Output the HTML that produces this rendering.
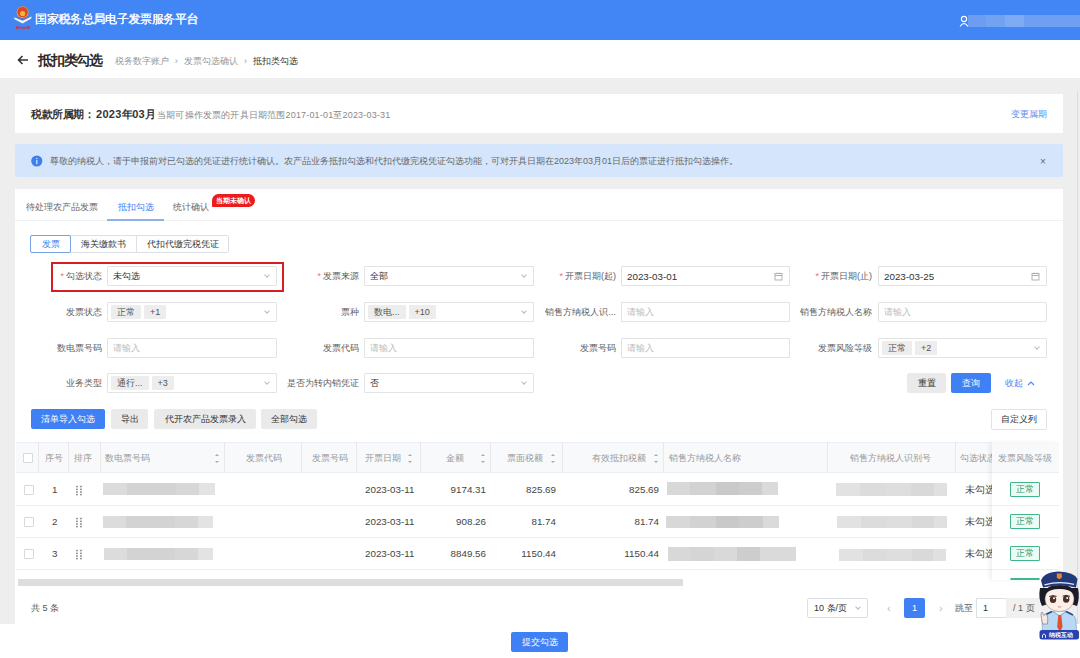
<!DOCTYPE html>
<html><head><meta charset="utf-8">
<style>
*{box-sizing:border-box;margin:0;padding:0}
html,body{width:1080px;height:658px;overflow:hidden;background:#eeeeee;font-family:"Liberation Sans",sans-serif;color:#333}
.a{position:absolute;white-space:nowrap}
#hdr{left:0;top:0;width:1080px;height:40px;background:#4285f4}
#ph{left:0;top:40px;width:1080px;height:38px;background:#fff}
.card{background:#fff}
.t9{font-size:9px}
.inp{position:absolute;height:20px;border:1px solid #e3e3e3;border-radius:1px;background:#fff;font-size:9px;line-height:19px;padding-left:5px;color:#333}
.ph{color:#bbb}
.lbl{position:absolute;font-size:9px;color:#606060;text-align:right;line-height:20px}
.req{color:#f56c6c;margin-right:2px}
.chev{position:absolute;right:7px;top:6px;width:4px;height:4px;border-right:1px solid #bbb;border-bottom:1px solid #bbb;transform:rotate(45deg)}
.tag{display:inline-block;height:14px;line-height:14px;background:#ededed;color:#555;padding:0 6px;border-radius:1px;margin-right:3px;font-size:9px;vertical-align:top;margin-top:2px}
.btn{position:absolute;height:20px;line-height:20px;text-align:center;font-size:9px;border-radius:2px;background:#eaeaea;color:#333}
.bp{background:#3f80f4;color:#fff}
.th{position:absolute;top:443px;height:31px;line-height:31px;font-size:9px;color:#999}
.vd{position:absolute;top:442px;width:1px;height:31px;background:#e8e8e8}
.hl{position:absolute;left:16px;width:1043px;height:1px;background:#ebeef5}
.cell{position:absolute;font-size:9.8px;color:#444;line-height:12px}
.blur{position:absolute;height:12px;background:linear-gradient(90deg,#dcdcdc 0 21%,#d3d3d3 21% 65%,#d7d7d7 65% 86%,#e3e3e3 86%)}
.bn{background:linear-gradient(90deg,#d8d8d8 0 21%,#d2d2d2 21% 44%,#c9c9c9 44% 65%,#cdcdcd 65% 86%,#dadada 86%)}
.bi{background:linear-gradient(90deg,#e2e2e2 0 22%,#dcdcdc 22% 45%,#dedede 45% 68%,#d9d9d9 68% 88%,#e0e0e0 88%)}
.cb{position:absolute;width:10px;height:10px;border:1px solid #d9d9d9;border-radius:1px;background:#fff}
.sort{position:absolute;width:4px;height:9px}
.sort:before{content:"";position:absolute;left:0;top:0;border:2px solid transparent;border-bottom:2.5px solid #aaa;border-top:0}
.sort:after{content:"";position:absolute;left:0;bottom:0;border:2px solid transparent;border-top:2.5px solid #aaa;border-bottom:0}
.ok{position:absolute;width:30px;height:15px;border:1px solid #3cb88a;color:#28a070;background:#eefaf5;font-size:9px;line-height:13px;text-align:center;border-radius:1px}

</style></head><body>

<!-- top header -->
<div id="hdr" class="a">
  <svg class="a" style="left:13px;top:5px" width="20" height="26" viewBox="0 0 20 26">
    <circle cx="9.6" cy="7.2" r="6" fill="#e6a23a"/>
    <circle cx="9.6" cy="7" r="5.2" fill="#e2442a"/>
    <circle cx="9.6" cy="8.6" r="2.6" fill="#f2b63c"/>
    <path d="M1 12.3 L9.6 15.8 L18.5 11.6 L18.2 13.6 L9.6 18.6 L1.6 14.3 Z" fill="#f4f6fb"/>
    <path d="M4 13.2 L9.6 15.3 L15.5 12.6 L15.5 11 L9.6 13.4 L4 11.5Z" fill="#6a6f88" opacity="0.6"/>
    <g fill="#c83a4a"><rect x="3" y="21.2" width="2.6" height="2.6"/><rect x="6.4" y="21.8" width="2.4" height="2"/><rect x="9.6" y="21.8" width="3" height="2"/><rect x="13.4" y="21.4" width="3.4" height="2.4"/></g>
  </svg>
  <div class="a" style="left:35px;top:10.5px;font-size:11.7px;line-height:16px;color:#fff;letter-spacing:-0.35px;text-shadow:0.3px 0 0 #fff">国家税务总局电子发票服务平台</div>
  <svg class="a" style="left:959px;top:15px" width="10" height="12" viewBox="0 0 10 12"><circle cx="5" cy="4" r="2.6" fill="none" stroke="#fff" stroke-width="1.1"/><path d="M1 11.5 Q5 5.5 9 11.5" fill="none" stroke="#fff" stroke-width="1.1"/></svg>
  <div class="a" style="left:968px;top:15px;width:112px;height:12px;background:linear-gradient(90deg,#6c9df1 0 16%,#72a2f2 16% 33%,#7eabf4 33% 50%,#6e9ff1 50%)"></div>
</div>

<!-- page header -->
<div id="ph" class="a">
  <svg class="a" style="left:17px;top:15px" width="12" height="10" viewBox="0 0 12 10"><path d="M11 5H1.5M5.5 1L1.5 5L5.5 9" stroke="#333" stroke-width="1.6" fill="none"/></svg>
  <div class="a" style="left:38px;top:12px;font-size:13.5px;line-height:18px;font-weight:bold;color:#2a2a2a;letter-spacing:-1.2px">抵扣类勾选</div>
  <div class="a" style="left:115px;top:16px;font-size:9px;line-height:11px;color:#999;letter-spacing:-0.1px">税务数字账户 <span style="margin:0 4px">›</span> 发票勾选确认 <span style="margin:0 4px">›</span> <span style="color:#333">抵扣类勾选</span></div>
</div>

<!-- card 1 -->
<div class="a card" style="left:15px;top:94px;width:1048px;height:39px">
  <div class="a" style="left:16px;top:14px;font-size:10.5px;line-height:13px;font-weight:bold;color:#333;letter-spacing:-0.5px">税款所属期：<span style="font-size:11px;letter-spacing:0.3px;margin-left:2px">2023</span>年<span style="font-size:11px;letter-spacing:0.3px">03</span>月</div>
  <div class="a" style="left:142px;top:16px;font-size:9px;line-height:11px;color:#8a8a8a;letter-spacing:0.18px">当期可操作发票的开具日期范围2017-01-01至2023-03-31</div>
  <div class="a" style="left:996px;top:15px;font-size:9px;line-height:11px;color:#5a8cf0">变更属期</div>
</div>

<!-- alert -->
<div class="a" style="left:15px;top:144px;width:1048px;height:33px;background:#d5e6fc;border-radius:2px">
  <svg class="a" style="left:16px;top:11px" width="12" height="12" viewBox="0 0 12 12"><circle cx="5.8" cy="6" r="5.6" fill="#3f80ef"/><rect x="5.2" y="5" width="1.2" height="4.2" fill="#d8e6fb"/><rect x="5.2" y="2.9" width="1.2" height="1.2" fill="#d8e6fb"/></svg>
  <div class="a" style="left:35px;top:12px;font-size:9px;line-height:11px;color:#666">尊敬的纳税人，请于申报前对已勾选的凭证进行统计确认。农产品业务抵扣勾选和代扣代缴完税凭证勾选功能，可对开具日期在2023年03月01日后的票证进行抵扣勾选操作。</div>
  <div class="a" style="left:1025px;top:12px;font-size:10px;line-height:12px;color:#666">×</div>
</div>

<!-- card 2 -->
<div class="a card" style="left:15px;top:189px;width:1048px;height:435px"></div>

<!-- tabs -->
<div class="a" style="left:15px;top:220px;width:1048px;height:1px;background:#eef0f3"></div>
<div class="a" style="left:26px;top:201.5px;font-size:9px;line-height:11px;color:#666">待处理农产品发票</div>
<div class="a" style="left:118px;top:201.5px;font-size:9px;line-height:11px;color:#3d7ff5">抵扣勾选</div>
<div class="a" style="left:107px;top:219px;width:57px;height:2px;background:#8fb0ea"></div>
<div class="a" style="left:173px;top:201.5px;font-size:9px;line-height:11px;color:#666">统计确认</div>
<div class="a" style="left:212px;top:194px;width:43px;height:13px;border-radius:7px 7px 7px 1px;background:#ec1c1c;color:#fff;font-size:7px;line-height:13px;text-align:center;font-weight:bold">当期未确认</div>

<!-- segmented -->
<div class="a" style="left:30px;top:235px;width:199px;height:18px;border:1px solid #dcdfe6;border-radius:2px;background:#fff"></div>
<div class="a" style="left:70px;top:236px;width:1px;height:16px;background:#dcdfe6"></div>
<div class="a" style="left:136px;top:236px;width:1px;height:16px;background:#dcdfe6"></div>
<div class="a" style="left:30px;top:235px;width:41px;height:18px;border:1px solid #76a0ea;border-radius:2px;color:#3d7ff5;font-size:9px;line-height:16px;text-align:center">发票</div>
<div class="a" style="left:71px;top:235px;width:65px;height:18px;font-size:9px;line-height:18px;text-align:center;color:#333">海关缴款书</div>
<div class="a" style="left:137px;top:235px;width:92px;height:18px;font-size:9px;line-height:18px;text-align:center;color:#333">代扣代缴完税凭证</div>

<!-- form -->
<div class="a" style="left:51px;top:262px;width:233px;height:30px;border:2px solid #d61e22"></div>

<div class="lbl" style="left:40px;top:266px;width:62px"><span class="req">*</span>勾选状态</div>
<div class="inp" style="left:107px;top:266px;width:170px">未勾选<i class="chev"></i></div>
<div class="lbl" style="left:290px;top:266px;width:69px"><span class="req">*</span>发票来源</div>
<div class="inp" style="left:364px;top:266px;width:170px">全部<i class="chev"></i></div>
<div class="lbl" style="left:540px;top:266px;width:76px"><span class="req">*</span>开票日期(起)</div>
<div class="inp" style="left:621px;top:266px;width:169px"><span style="font-size:9.8px">2023-03-01</span><svg style="position:absolute;right:6px;top:5px" width="9" height="9" viewBox="0 0 9 9"><rect x="1" y="1.5" width="7" height="6.5" fill="none" stroke="#aaa" stroke-width="0.9"/><path d="M1 3.5H8M3 0.5V2M6 0.5V2" stroke="#aaa" stroke-width="0.9"/></svg></div>
<div class="lbl" style="left:795px;top:266px;width:77px"><span class="req">*</span>开票日期(止)</div>
<div class="inp" style="left:878px;top:266px;width:169px"><span style="font-size:9.8px">2023-03-25</span><svg style="position:absolute;right:6px;top:5px" width="9" height="9" viewBox="0 0 9 9"><rect x="1" y="1.5" width="7" height="6.5" fill="none" stroke="#aaa" stroke-width="0.9"/><path d="M1 3.5H8M3 0.5V2M6 0.5V2" stroke="#aaa" stroke-width="0.9"/></svg></div>

<div class="lbl" style="left:40px;top:302px;width:62px">发票状态</div>
<div class="inp" style="left:107px;top:302px;width:170px;padding-left:3px"><span class="tag">正常</span><span class="tag">+1</span><i class="chev"></i></div>
<div class="lbl" style="left:290px;top:302px;width:69px">票种</div>
<div class="inp" style="left:364px;top:302px;width:170px;padding-left:3px"><span class="tag">数电...</span><span class="tag">+10</span><i class="chev"></i></div>
<div class="lbl" style="left:540px;top:302px;width:76px">销售方纳税人识...</div>
<div class="inp ph" style="left:621px;top:302px;width:169px">请输入</div>
<div class="lbl" style="left:795px;top:302px;width:77px">销售方纳税人名称</div>
<div class="inp ph" style="left:878px;top:302px;width:169px">请输入</div>

<div class="lbl" style="left:40px;top:338px;width:62px">数电票号码</div>
<div class="inp ph" style="left:107px;top:338px;width:170px">请输入</div>
<div class="lbl" style="left:290px;top:338px;width:69px">发票代码</div>
<div class="inp ph" style="left:364px;top:338px;width:170px">请输入</div>
<div class="lbl" style="left:540px;top:338px;width:76px">发票号码</div>
<div class="inp ph" style="left:621px;top:338px;width:169px">请输入</div>
<div class="lbl" style="left:795px;top:338px;width:77px">发票风险等级</div>
<div class="inp" style="left:878px;top:338px;width:169px;padding-left:3px"><span class="tag">正常</span><span class="tag">+2</span><i class="chev"></i></div>

<div class="lbl" style="left:40px;top:373px;width:62px">业务类型</div>
<div class="inp" style="left:107px;top:373px;width:170px;padding-left:3px"><span class="tag">通行...</span><span class="tag">+3</span><i class="chev"></i></div>
<div class="lbl" style="left:280px;top:373px;width:79px">是否为转内销凭证</div>
<div class="inp" style="left:364px;top:373px;width:170px">否<i class="chev"></i></div>

<div class="btn" style="left:907px;top:373px;width:39px">重置</div>
<div class="btn bp" style="left:951px;top:373px;width:40px">查询</div>
<div class="a" style="left:1005px;top:377px;font-size:9px;line-height:12px;color:#4a86ee">收起</div>
<svg class="a" style="left:1027px;top:380px" width="8" height="6" viewBox="0 0 8 6"><path d="M1 5L4 2L7 5" stroke="#4a86ee" stroke-width="1.1" fill="none"/></svg>

<!-- action buttons -->
<div class="btn bp" style="left:31px;top:409px;width:74px">清单导入勾选</div>
<div class="btn" style="left:111px;top:409px;width:37px">导出</div>
<div class="btn" style="left:154px;top:409px;width:102px">代开农产品发票录入</div>
<div class="btn" style="left:261px;top:409px;width:56px">全部勾选</div>
<div class="btn" style="left:991px;top:409px;width:56px;height:21px;background:#fff;border:1px solid #e3e3e3;line-height:19px">自定义列</div>

<!-- table -->
<div class="a" style="left:16px;top:442px;width:1043px;height:31px;background:#f8f9fb"></div>
<div class="hl" style="top:442px"></div>
<div class="hl" style="top:472px"></div>
<div class="hl" style="top:505px"></div>
<div class="hl" style="top:537px"></div>
<div class="hl" style="top:569px"></div>

<div class="vd" style="left:38px"></div>
<div class="vd" style="left:68px"></div>
<div class="vd" style="left:100px"></div>
<div class="vd" style="left:224px"></div>
<div class="vd" style="left:301px"></div>
<div class="vd" style="left:356px"></div>
<div class="vd" style="left:420px"></div>
<div class="vd" style="left:490px"></div>
<div class="vd" style="left:562px"></div>
<div class="vd" style="left:663px"></div>
<div class="vd" style="left:827px"></div>
<div class="vd" style="left:955px"></div>

<div class="cb" style="left:23px;top:453px"></div>
<div class="th" style="left:45px">序号</div>
<div class="th" style="left:74px">排序</div>
<div class="th" style="left:105px">数电票号码</div><i class="sort" style="left:215px;top:453.5px"></i>
<div class="th" style="left:246px">发票代码</div>
<div class="th" style="left:312px">发票号码</div>
<div class="th" style="left:365px">开票日期</div><i class="sort" style="left:408px;top:453.5px"></i>
<div class="th" style="left:446px">金额</div><i class="sort" style="left:481px;top:453.5px"></i>
<div class="th" style="left:507px">票面税额</div><i class="sort" style="left:551px;top:453.5px"></i>
<div class="th" style="left:592px">有效抵扣税额</div><i class="sort" style="left:654px;top:453.5px"></i>
<div class="th" style="left:669px">销售方纳税人名称</div>
<div class="th" style="left:850px">销售方纳税人识别号</div>
<div class="th" style="left:960px">勾选状态</div>

<!-- rows -->
<div class="cb" style="left:24px;top:485px"></div>
<div class="cell" style="left:52px;top:484px">1</div>
<svg class="a" style="left:76px;top:485px" width="7" height="11" viewBox="0 0 7 11" fill="#777"><rect x="0.2" y="0.8" width="1.5" height="1.5"/><rect x="4.2" y="0.8" width="1.5" height="1.5"/><rect x="0.2" y="3.6" width="1.5" height="1.5"/><rect x="4.2" y="3.6" width="1.5" height="1.5"/><rect x="0.2" y="6.2" width="1.5" height="1.5"/><rect x="4.2" y="6.2" width="1.5" height="1.5"/><rect x="0.2" y="8.8" width="1.5" height="1.5"/><rect x="4.2" y="8.8" width="1.5" height="1.5"/></svg>
<div class="blur" style="left:103px;top:483px;width:112px"></div>
<div class="cell" style="left:365px;top:484px">2023-03-11</div>
<div class="cell" style="left:420px;top:484px;width:66px;text-align:right">9174.31</div>
<div class="cell" style="left:490px;top:484px;width:66px;text-align:right">825.69</div>
<div class="cell" style="left:563px;top:484px;width:96px;text-align:right">825.69</div>
<div class="blur bn" style="left:667px;top:482px;width:111px;height:13px"></div>
<div class="blur bi" style="left:836px;top:483px;width:111px;height:12.5px"></div>
<div class="cell" style="left:965px;top:484px">未勾选</div>

<div class="cb" style="left:24px;top:517px"></div>
<div class="cell" style="left:52px;top:516px">2</div>
<svg class="a" style="left:76px;top:517px" width="7" height="11" viewBox="0 0 7 11" fill="#777"><rect x="0.2" y="0.8" width="1.5" height="1.5"/><rect x="4.2" y="0.8" width="1.5" height="1.5"/><rect x="0.2" y="3.6" width="1.5" height="1.5"/><rect x="4.2" y="3.6" width="1.5" height="1.5"/><rect x="0.2" y="6.2" width="1.5" height="1.5"/><rect x="4.2" y="6.2" width="1.5" height="1.5"/><rect x="0.2" y="8.8" width="1.5" height="1.5"/><rect x="4.2" y="8.8" width="1.5" height="1.5"/></svg>
<div class="blur" style="left:103px;top:516px;width:110px;height:11.5px"></div>
<div class="cell" style="left:365px;top:516px">2023-03-11</div>
<div class="cell" style="left:420px;top:516px;width:66px;text-align:right">908.26</div>
<div class="cell" style="left:490px;top:516px;width:66px;text-align:right">81.74</div>
<div class="cell" style="left:563px;top:516px;width:96px;text-align:right">81.74</div>
<div class="blur bn" style="left:666px;top:515.5px;width:113px"></div>
<div class="blur bi" style="left:837px;top:516px;width:110px"></div>
<div class="cell" style="left:965px;top:516px">未勾选</div>

<div class="cb" style="left:24px;top:549px"></div>
<div class="cell" style="left:52px;top:548px">3</div>
<svg class="a" style="left:76px;top:549px" width="7" height="11" viewBox="0 0 7 11" fill="#777"><rect x="0.2" y="0.8" width="1.5" height="1.5"/><rect x="4.2" y="0.8" width="1.5" height="1.5"/><rect x="0.2" y="3.6" width="1.5" height="1.5"/><rect x="4.2" y="3.6" width="1.5" height="1.5"/><rect x="0.2" y="6.2" width="1.5" height="1.5"/><rect x="4.2" y="6.2" width="1.5" height="1.5"/><rect x="0.2" y="8.8" width="1.5" height="1.5"/><rect x="4.2" y="8.8" width="1.5" height="1.5"/></svg>
<div class="blur" style="left:104px;top:548px;width:109px"></div>
<div class="cell" style="left:365px;top:548px">2023-03-11</div>
<div class="cell" style="left:420px;top:548px;width:66px;text-align:right">8849.56</div>
<div class="cell" style="left:490px;top:548px;width:66px;text-align:right">1150.44</div>
<div class="cell" style="left:563px;top:548px;width:96px;text-align:right">1150.44</div>
<div class="blur bn" style="left:668px;top:547px;width:128px;height:14px;background:linear-gradient(90deg,#d8d8d8 0 18%,#d5d5d5 18% 36%,#d9d9d9 36% 54%,#cdcdcd 54% 72%,#dadada 72%)"></div>
<div class="blur bi" style="left:839px;top:548.5px;width:107px"></div>
<div class="cell" style="left:965px;top:548px">未勾选</div>

<!-- fixed right column -->
<div class="a" style="left:992px;top:442px;width:67px;height:138px;background:#fff;box-shadow:-3px 0 4px rgba(0,0,0,0.06)"></div>
<div class="a" style="left:992px;top:442px;width:67px;height:31px;background:#f8f9fb"></div>
<div class="a" style="left:992px;top:472px;width:67px;height:1px;background:#ebeef5"></div>
<div class="a" style="left:992px;top:505px;width:67px;height:1px;background:#ebeef5"></div>
<div class="a" style="left:992px;top:537px;width:67px;height:1px;background:#ebeef5"></div>
<div class="a" style="left:992px;top:569px;width:67px;height:1px;background:#ebeef5"></div>
<div class="th" style="left:998px">发票风险等级</div>
<div class="ok" style="left:1010px;top:482px">正常</div>
<div class="ok" style="left:1010px;top:514px">正常</div>
<div class="ok" style="left:1010px;top:546px">正常</div>
<div class="ok" style="left:1010px;top:578px;height:2px"></div>

<!-- h scrollbar -->
<div class="a" style="left:18px;top:579px;width:665px;height:7px;background:#dddddd"></div>

<!-- pagination -->
<div class="a" style="left:31px;top:603px;font-size:9px;line-height:11px;color:#555">共 5 条</div>
<div class="a" style="left:807px;top:598px;width:61px;height:20px;border:1px solid #dcdfe6;border-radius:2px;font-size:9px;line-height:18px;padding-left:6px;color:#333">10 条/页<i class="chev" style="right:7px;top:6px"></i></div>
<div class="a" style="left:887px;top:602px;font-size:11px;line-height:13px;color:#bbb">‹</div>
<div class="a" style="left:904px;top:598px;width:21px;height:20px;background:#3f80f4;border-radius:2px;color:#fff;font-size:9px;line-height:20px;text-align:center">1</div>
<div class="a" style="left:939px;top:602px;font-size:11px;line-height:13px;color:#bbb">›</div>
<div class="a" style="left:955px;top:603px;font-size:9px;line-height:11px;color:#666">跳至</div>
<div class="a" style="left:976px;top:598px;width:31px;height:20px;border:1px solid #dcdfe6;font-size:9px;line-height:18px;padding-left:6px;color:#333;background:#fff">1</div>
<div class="a" style="left:1006px;top:598px;width:50px;height:20px;background:#f0f0f0;font-size:9px;line-height:20px;padding-left:7px;color:#555">/ 1 页</div>

<!-- footer -->
<div class="a" style="left:0;top:624px;width:1080px;height:34px;background:#fff"></div>
<div class="btn bp" style="left:511px;top:632px;width:57px">提交勾选</div>

<!-- scrollbar right -->
<div class="a" style="left:1077px;top:91px;width:1px;height:533px;background:#dcdcdc"></div>

<!-- mascot -->
<svg class="a" style="left:1036px;top:568px" width="44" height="76" viewBox="0 0 44 76">
  <path d="M4 20 Q2 30 6 38 L12 36 L35 36 L41 38 Q44 30 42 20 Z" fill="#1b1c28"/>
  <path d="M6 52 Q8 45 16 43.5 L30 43.5 Q38 45 40 52 L40.5 64 L6.5 64 Z" fill="#b9d8f5" stroke="#7592bb" stroke-width="0.6"/>
  <path d="M9 47 L16 43.5 M37 47 L30 43.5" stroke="#2a4c88" stroke-width="1.6"/>
  <path d="M17 43.5 L23.5 48 L30 43.5" fill="#e9f2fb" stroke="#5a78a8" stroke-width="0.6"/>
  <path d="M22.3 47 L25.3 47 L26.5 59 L24 64 L21.2 59 Z" fill="#e2522a"/>
  <ellipse cx="23.5" cy="31" rx="14.5" ry="12.5" fill="#fbefe9" stroke="#8c7c78" stroke-width="0.5"/>
  <path d="M8.5 26 Q9 17 23.5 17 Q38 17 38.5 26 Q33 21 23.5 21 Q14 21 8.5 26Z" fill="#1b1c28"/>
  <path d="M5 12.5 Q8 4 23 3.5 Q38 4 41.5 11 L40 19.5 Q23.5 15.5 7 19.5 Z" fill="#24397a"/>
  <path d="M8.5 16.8 Q23.5 12.8 38 16.3" stroke="#e4e9f5" stroke-width="1.2" fill="none"/>
  <path d="M20.8 5.5 L25.8 5.5 L25.8 9.8 L23.3 11.3 L20.8 9.8 Z" fill="#e7843a"/>
  <ellipse cx="17" cy="31.5" rx="3.2" ry="3.6" fill="#4d2f26"/>
  <ellipse cx="30.2" cy="31.2" rx="3.2" ry="3.6" fill="#4d2f26"/>
  <path d="M13.2 28.6 Q17 26.5 20.6 28.4 M26.6 28.2 Q30.2 26.3 34 28.4" stroke="#222" stroke-width="0.9" fill="none"/>
  <circle cx="18" cy="30.2" r="1" fill="#fff"/>
  <circle cx="31.2" cy="29.9" r="1" fill="#fff"/>
  <path d="M22 38.6 Q23.6 39.8 25.2 38.6" stroke="#b06a5a" stroke-width="0.7" fill="none"/>
  <path d="M6.5 56 L5 47 Q4.8 44.5 6.2 44 L7.8 47.5 L9.5 46 Q11.8 46.5 11.8 50 L11.5 56 Z" fill="#f4e8e4" stroke="#7e7e7e" stroke-width="0.7"/>
  <rect x="3.5" y="62" width="39.5" height="9.5" rx="2.5" fill="#2942b0"/>
  <text x="25" y="69.3" font-size="6" font-weight="bold" fill="#fff" text-anchor="middle" font-family="Liberation Sans">纳税互动</text>
  <path d="M6.5 69.8 L6.5 67 Q8 64.8 9.5 67 L9.5 69.8" stroke="#fff" stroke-width="0.9" fill="none"/>
</svg>

</body></html>
